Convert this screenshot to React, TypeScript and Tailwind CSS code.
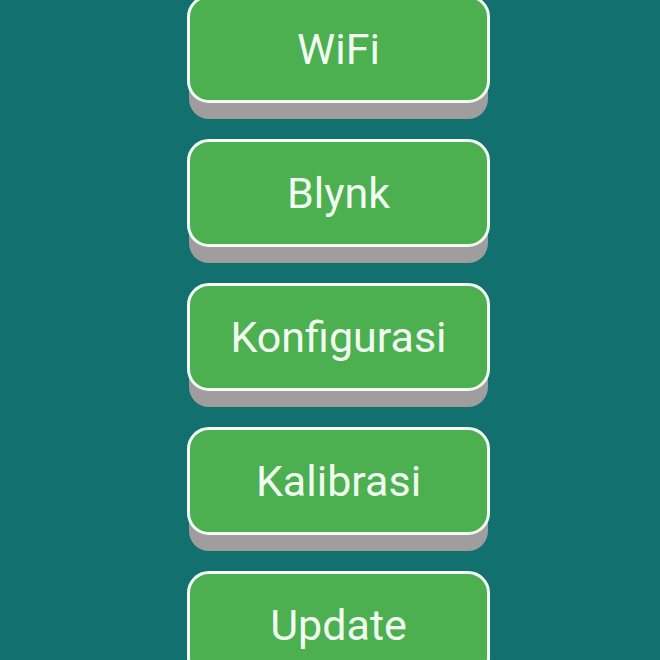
const items = ["WiFi", "Blynk", "Konfigurasi", "Kalibrasi", "Update"];

export default function App() {
  return (
    <div className="w-[660px] h-[660px] overflow-hidden bg-[#12706f]">
      <div className="flex flex-col items-center gap-[36px] -mt-[5px] pl-[17px]">
        {items.map((label) => (
          <button
            key={label}
            className="w-[303px] h-[108px] shrink-0 rounded-[22px] border-[3px] border-[#f2fff2] bg-[#4caf50] text-[#f1fdf0] text-[43px] leading-none shadow-[0_18px_0_-2px_#9f9d9e]"
            style={{ fontFamily: "Roboto, 'Liberation Sans', sans-serif" }}
          >
            {label}
          </button>
        ))}
      </div>
    </div>
  );
}
